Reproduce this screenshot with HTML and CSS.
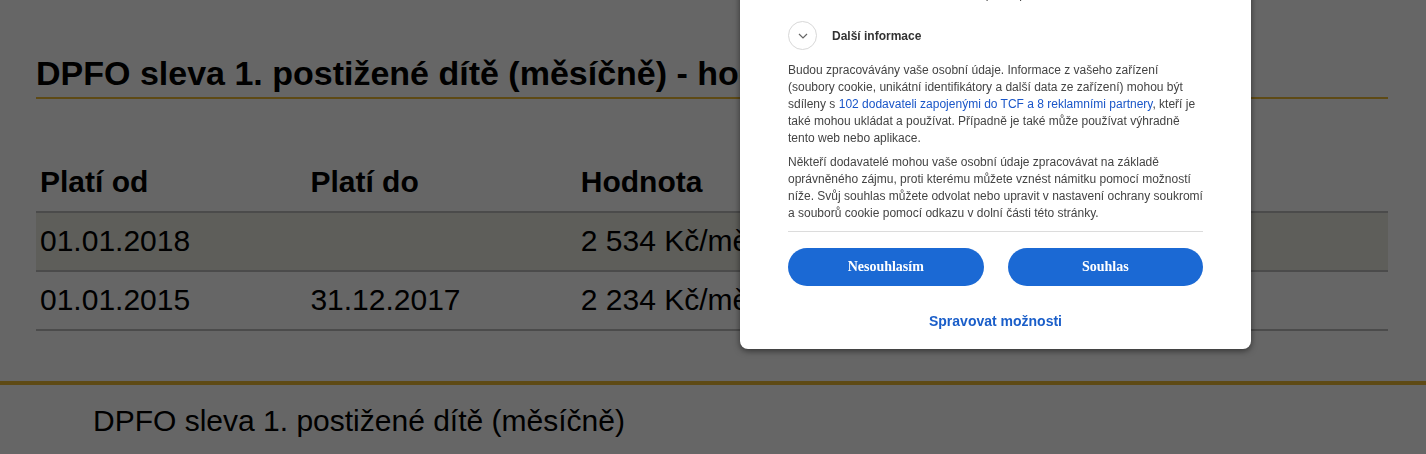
FILE: index.html
```html
<!DOCTYPE html>
<html lang="cs">
<head>
    <meta charset="UTF-8">
    <meta name="viewport" content="width=device-width, initial-scale=1.0">
    <title>DPFO sleva 1. postižené dítě (měsíčně)</title>
    <link rel="stylesheet" href="styles.css">
</head>
<body>
    <div class="page">
        <h2 class="title">DPFO sleva 1. postižené dítě (měsíčně) - hodnoty v jednotlivých letech</h2>

        <table class="values">
            <thead>
                <tr>
                    <th>Platí od</th>
                    <th>Platí do</th>
                    <th>Hodnota</th>
                    <th>Poznámka</th>
                    <th></th>
                </tr>
            </thead>
            <tbody>
                <tr class="odd">
                    <td>01.01.2018</td>
                    <td></td>
                    <td>2 534 Kč/měsíc</td>
                    <td></td>
                    <td></td>
                </tr>
                <tr>
                    <td>01.01.2015</td>
                    <td>31.12.2017</td>
                    <td>2 234 Kč/měsíc</td>
                    <td></td>
                    <td></td>
                </tr>
            </tbody>
        </table>
    </div>

    <div class="related">
        <p>DPFO sleva 1. postižené dítě (měsíčně)</p>
    </div>

    <div class="overlay"></div>

    <div class="consent">
        <p class="consent-lead">Vy máte kontrolu nad svými údaji. Souhlas můžete kdykoli změnit v nastavení. Správa předvoleb</p>

        <div class="more">
            <span class="chevron">
                <svg width="10" height="6" viewBox="0 0 10 6"><path d="M1 1 L5 5 L9 1" fill="none" stroke="#666" stroke-width="1.2"/></svg>
            </span>
            <span class="more-label">Další informace</span>
        </div>

        <p class="consent-text">Budou zpracovávány vaše osobní údaje. Informace z vašeho zařízení (soubory cookie, unikátní identifikátory a další data ze zařízení) mohou být sdíleny s <a href="#">102 dodavateli zapojenými do TCF a 8 reklamními partnery</a>, kteří je také mohou ukládat a používat. Případně je také může používat výhradně tento web nebo aplikace.</p>
        <p class="consent-text">Někteří dodavatelé mohou vaše osobní údaje zpracovávat na základě oprávněného zájmu, proti kterému můžete vznést námitku pomocí možností níže. Svůj souhlas můžete odvolat nebo upravit v nastavení ochrany soukromí a souborů cookie pomocí odkazu v dolní části této stránky.</p>

        <div class="consent-buttons">
            <button class="btn">Nesouhlasím</button>
            <button class="btn">Souhlas</button>
        </div>

        <a class="manage" href="#">Spravovat možnosti</a>
    </div>
</body>
</html>
```

FILE: styles.css
```css
body { margin: 0; font-family: "Liberation Sans", Arial, sans-serif; color: #000; background: #fff; }

.page { padding: 54px 38px 0 36px; }
.title { margin: 0; font-size: 34px; font-weight: bold; line-height: 39px; padding-bottom: 4px; border-bottom: 2px solid #ebb835; white-space: nowrap; overflow: hidden; }

.values { width: 100%; margin-top: 66px; border-collapse: collapse; table-layout: fixed; }
.values th { text-align: left; font-size: 30px; font-weight: bold; padding: 0 4px 12px; line-height: 34px; border-bottom: 2px solid #bbbbbb; }
.values td { font-size: 30px; padding: 11px 4px 12px; line-height: 34px; border-bottom: 2px solid #bbbbbb; white-space: nowrap; }
.values tr.odd td { background: #ebebe0; }

.related { margin-top: 50px; border-top: 4px solid #ebb835; padding: 0 0 0 93px; }
.related p { margin: 0; padding-top: 19px; font-size: 30px; line-height: 34px; }

.overlay { position: fixed; inset: 0; background: rgba(0, 0, 0, 0.6); }

.consent { position: fixed; left: 740px; bottom: 105px; width: 415px; padding: 0 48px 19px; background: #fff; border-radius: 8px; box-shadow: 0 2px 6px rgba(0, 0, 0, 0.5); font-size: 12px; color: #444; }
.consent-lead { margin: 0 0 18px; text-align: center; line-height: 17px; }

.more { display: flex; align-items: center; gap: 15px; height: 29px; margin-bottom: 12px; }
.chevron { width: 27px; height: 27px; border: 1px solid #d8d8d8; border-radius: 50%; display: flex; align-items: center; justify-content: center; }
.more-label { font-weight: bold; color: #333; }

.consent-text { margin: 0 0 7px; line-height: 17px; }
.consent-text a { color: #1a56c8; text-decoration: none; }

.consent-buttons { display: flex; gap: 24px; margin-top: 9px; padding-top: 16px; border-top: 1px solid #dcdcdc; }
.btn { flex: 1; height: 38px; border: none; border-radius: 19px; background: #1b69d4; color: #fff; font-family: "Liberation Serif", "Times New Roman", serif; font-size: 14px; font-weight: bold; cursor: pointer; }

.manage { display: block; margin-top: 27px; text-align: center; color: #1a5ec9; font-size: 14px; font-weight: bold; text-decoration: none; line-height: 17px; }
```
